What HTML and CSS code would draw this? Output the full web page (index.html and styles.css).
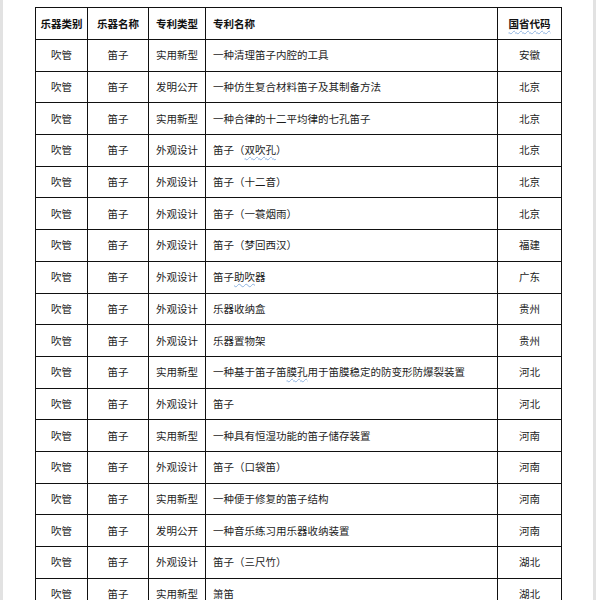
FILE: index.html
```html
<!DOCTYPE html>
<html lang="zh-CN">
<head>
<meta charset="utf-8">
<title>笛子专利</title>
<link rel="stylesheet" href="styles.css">
</head>
<body>
<div class="page">
  <table class="patents">
    <colgroup>
      <col class="c-cat"><col class="c-name"><col class="c-type"><col class="c-title"><col class="c-prov">
    </colgroup>
    <thead>
      <tr><th>乐器类别</th><th>乐器名称</th><th>专利类型</th><th class="left">专利名称</th><th><span class="squiggle">国省代码</span></th></tr>
    </thead>
    <tbody>
      <tr><td>吹管</td><td>笛子</td><td>实用新型</td><td class="left">一种清理笛子内腔的工具</td><td>安徽</td></tr>
      <tr><td>吹管</td><td>笛子</td><td>发明公开</td><td class="left">一种仿生复合材料笛子及其制备方法</td><td>北京</td></tr>
      <tr><td>吹管</td><td>笛子</td><td>实用新型</td><td class="left">一种合律的十二平均律的七孔笛子</td><td>北京</td></tr>
      <tr><td>吹管</td><td>笛子</td><td>外观设计</td><td class="left">笛子（<span class="squiggle">双吹孔</span>）</td><td>北京</td></tr>
      <tr><td>吹管</td><td>笛子</td><td>外观设计</td><td class="left">笛子（十二音）</td><td>北京</td></tr>
      <tr><td>吹管</td><td>笛子</td><td>外观设计</td><td class="left">笛子（一蓑烟雨）</td><td>北京</td></tr>
      <tr><td>吹管</td><td>笛子</td><td>外观设计</td><td class="left">笛子（梦回西汉）</td><td>福建</td></tr>
      <tr><td>吹管</td><td>笛子</td><td>外观设计</td><td class="left">笛子<span class="squiggle">助吹</span>器</td><td>广东</td></tr>
      <tr><td>吹管</td><td>笛子</td><td>外观设计</td><td class="left">乐器收纳盒</td><td>贵州</td></tr>
      <tr><td>吹管</td><td>笛子</td><td>外观设计</td><td class="left">乐器置物架</td><td>贵州</td></tr>
      <tr><td>吹管</td><td>笛子</td><td>实用新型</td><td class="left">一种基于笛子笛<span class="squiggle">膜孔</span>用于笛膜稳定的防变形防爆裂装置</td><td>河北</td></tr>
      <tr><td>吹管</td><td>笛子</td><td>外观设计</td><td class="left">笛子</td><td>河北</td></tr>
      <tr><td>吹管</td><td>笛子</td><td>实用新型</td><td class="left">一种具有恒湿功能的笛子储存装置</td><td>河南</td></tr>
      <tr><td>吹管</td><td>笛子</td><td>外观设计</td><td class="left">笛子（口袋笛）</td><td>河南</td></tr>
      <tr><td>吹管</td><td>笛子</td><td>实用新型</td><td class="left">一种便于修复的笛子结构</td><td>河南</td></tr>
      <tr><td>吹管</td><td>笛子</td><td>发明公开</td><td class="left">一种音乐练习用乐器收纳装置</td><td>河南</td></tr>
      <tr><td>吹管</td><td>笛子</td><td>外观设计</td><td class="left">笛子（三尺竹）</td><td>湖北</td></tr>
      <tr><td>吹管</td><td>笛子</td><td>实用新型</td><td class="left">箫笛</td><td>湖北</td></tr>
    </tbody>
  </table>
</div>
</body>
</html>
```
FILE: styles.css
```css
html, body {
  margin: 0;
  padding: 0;
  background: #ffffff;
}
body {
  width: 596px;
  height: 600px;
  overflow: hidden;
}
.page {
  box-sizing: border-box;
  width: 596px;
  height: 600px;
  border-left: 3px solid #e2e2e2;
  border-right: 3px solid #e2e2e2;
  padding: 7px 0 0 32px;
  background: #fff;
  font-family: "Noto Sans CJK SC", "Noto Sans", sans-serif;
  color: #1c1c1c;
}
.patents {
  border-collapse: collapse;
  table-layout: fixed;
  width: 526px;
  font-size: 10.5px;
  line-height: 14px;
}
.c-cat { width: 52px; }
.c-name { width: 61px; }
.c-type { width: 57px; }
.c-title { width: 292px; }
.c-prov { width: 64px; }
.patents th,
.patents td {
  border: 1px solid #111;
  text-align: center;
  vertical-align: middle;
  padding: 0 2px;
  white-space: nowrap;
  overflow: hidden;
}
.patents th {
  height: 31px;
  font-weight: 600;
  color: #111;
}
.patents td {
  height: 30.7px;
  font-weight: 400;
}
.patents .left {
  text-align: left;
  padding-left: 7px;
}
.squiggle {
  text-decoration: underline wavy #8fb3e0;
  text-decoration-thickness: 1px;
  text-underline-offset: 2px;
}
```
